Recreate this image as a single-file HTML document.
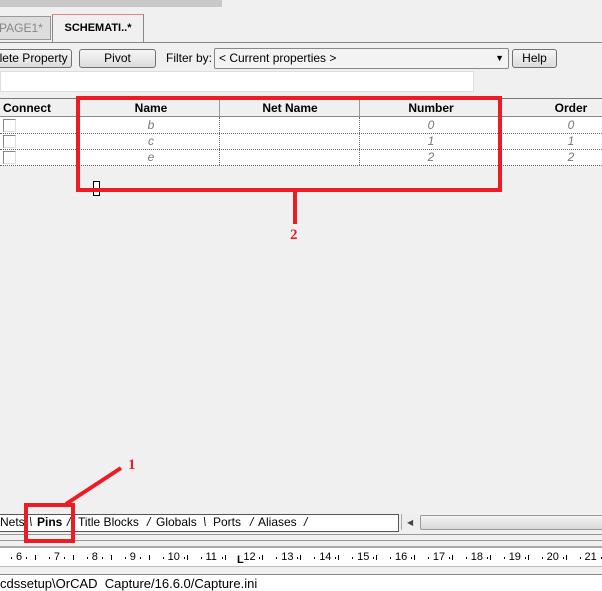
<!DOCTYPE html>
<html><head><meta charset="utf-8"><style>
body{margin:0;width:602px;height:591px;background:#f0f0f0;position:relative;overflow:hidden;font-family:"Liberation Sans",sans-serif;font-size:12px;color:#000}
.a{position:absolute}
.btn{position:absolute;height:17px;border:1px solid #707070;border-radius:3px;background:linear-gradient(#f6f6f6,#dcdcdc);text-align:center;line-height:17px;font-size:12px;white-space:nowrap;overflow:hidden}
.hd{position:absolute;top:99px;height:18px;line-height:18px;font-weight:bold;text-align:center;font-size:12px}
.cell{position:absolute;height:16px;line-height:16px;font-style:italic;color:#777;text-align:center;width:40px}
.dl{position:absolute;left:0;width:602px;border-top:1px dotted #666}
.vd{position:absolute;border-left:1px dotted #666}
.cb{position:absolute;left:3px;width:11px;height:11px;border:1px solid #888;border-right-color:#ddd;border-bottom-color:#ddd;background:#fff}
.rn{position:absolute;top:551px;font-size:11px}
.bt{position:absolute;top:515px;line-height:15px;font-size:12px;white-space:pre}
</style></head><body>
<div class="a" style="left:0;top:0;width:222px;height:7px;background:#c8c8c8"></div>
<div class="a" style="left:-2px;top:16px;width:51px;height:22px;border:1px solid #999;background:#ddd;color:#888;line-height:22px;font-size:12px">PAGE1*</div>
<div class="a" style="left:52px;top:14px;width:90px;height:28px;border:1px solid #888;border-top-color:#f08080;border-bottom:none;background:#f0f0f0;font-weight:bold;line-height:26px;text-align:center;font-size:11px">SCHEMATI..*</div>
<div class="a" style="left:0;top:42px;width:602px;height:1px;background:#888"></div>
<div class="btn" style="left:-30px;top:49px;width:100px;text-align:right">elete Property&nbsp;</div>
<div class="btn" style="left:79px;top:49px;width:75px">Pivot</div>
<div class="a" style="left:166px;top:50px;line-height:17px">Filter by:</div>
<div class="a" style="left:214px;top:48px;width:289px;height:19px;border:1px solid #888;border-radius:2px;background:#f3f3f3;line-height:19px;padding-left:4px">&lt; Current properties &gt;<span style="position:absolute;right:4px;top:0;font-size:9px">▼</span></div>
<div class="btn" style="left:512px;top:49px;width:43px">Help</div>
<div class="a" style="left:0;top:71px;width:472px;height:19px;background:#fff;border:1px solid #ddd"></div>
<div class="a" style="left:0;top:98px;width:602px;height:1px;background:#777"></div>
<div class="a" style="left:0;top:117px;width:602px;height:48px;background:#fff"></div>
<div class="a" style="left:0;top:116px;width:602px;height:1px;background:#888"></div>
<div class="hd" style="left:3px;text-align:left">Connect</div>
<div class="hd" style="left:81px;width:140px">Name</div>
<div class="hd" style="left:220px;width:140px">Net Name</div>
<div class="hd" style="left:360px;width:142px">Number</div>
<div class="hd" style="left:540px;width:62px">Order</div>
<div class="a" style="left:219px;top:99px;width:1px;height:18px;background:#999"></div>
<div class="a" style="left:359px;top:99px;width:1px;height:18px;background:#999"></div>
<div class="vd" style="left:219px;top:117px;height:48px"></div>
<div class="vd" style="left:359px;top:117px;height:48px"></div>
<div class="dl" style="top:133px"></div><div class="dl" style="top:149px"></div><div class="dl" style="top:165px"></div>
<div class="cb" style="top:119px"></div><div class="cb" style="top:135px"></div><div class="cb" style="top:151px"></div>
<div class="cell" style="left:131px;top:117px">b</div>
<div class="cell" style="left:131px;top:133px">c</div>
<div class="cell" style="left:131px;top:149px">e</div>
<div class="cell" style="left:411px;top:117px">0</div>
<div class="cell" style="left:411px;top:133px">1</div>
<div class="cell" style="left:411px;top:149px">2</div>
<div class="cell" style="left:551px;top:117px">0</div>
<div class="cell" style="left:551px;top:133px">1</div>
<div class="cell" style="left:551px;top:149px">2</div>
<div class="a" style="left:93px;top:181px;width:5px;height:13px;border:1px solid #000;background:#fff"></div>
<div class="a" style="left:76px;top:96px;width:418px;height:88px;border:4px solid #ed1c24"></div>
<div class="a" style="left:293px;top:188px;width:4px;height:36px;background:#ed1c24"></div>
<div class="a" style="left:290px;top:227px;color:#ed1c24;font-weight:bold;font-size:15px;font-family:'Liberation Serif',serif">2</div>
<div class="a" style="left:0;top:514px;width:398px;height:16px;background:#fff;border:1px solid #555;border-left:none"></div>
<div class="bt" style="left:0">Nets</div>
<div class="bt" style="left:29px"><i>\</i></div>
<div class="bt" style="left:37px"><b>Pins</b></div>
<div class="bt" style="left:67px"><i>/</i></div>
<div class="bt" style="left:78px">Title Blocks</div>
<div class="bt" style="left:147px"><i>/</i></div>
<div class="bt" style="left:156px">Globals</div>
<div class="bt" style="left:203px"><i>\</i></div>
<div class="bt" style="left:213px">Ports</div>
<div class="bt" style="left:250px"><i>/</i></div>
<div class="bt" style="left:258px">Aliases</div>
<div class="bt" style="left:304px"><i>/</i></div>
<div class="a" style="left:401px;top:514px;width:201px;height:16px;background:#eee;border-left:1px solid #aaa"></div>
<div class="a" style="left:407px;top:515px;font-size:8px;color:#444;line-height:15px">◀</div>
<div class="a" style="left:420px;top:515px;width:182px;height:13px;border:1px solid #999;border-radius:2px;background:linear-gradient(#f4f4f4,#d8d8d8)"></div>
<div class="a" style="left:0;top:534px;width:602px;height:1px;background:#999"></div>
<div class="a" style="left:0;top:540px;width:602px;height:1px;background:#999"></div>
<div class="a" style="left:0;top:546px;width:602px;height:2px;background:#aaa"></div>
<div class="a" style="left:0;top:548px;width:602px;height:18px;background:#fff"></div>
<div class="a" style="left:0;top:566px;width:602px;height:1px;background:#bbb"></div>
<div class="a" style="left:0;top:574px;width:602px;height:1px;background:#888"></div>
<div class="a" style="left:0;top:575px;width:602px;height:16px;background:#fff"></div>
<div class="a" style="left:0;top:576px;font-size:13px;white-space:pre">cdssetup\OrCAD  Capture/16.6.0/Capture.ini</div>
<div class="a" style="left:24px;top:503px;width:43px;height:32px;border:4px solid #ed1c24"></div>
<svg class="a" style="left:0;top:0" width="602" height="591"><line x1="66" y1="504" x2="121" y2="468" stroke="#ed1c24" stroke-width="4"/></svg>
<div class="a" style="left:128px;top:457px;color:#ed1c24;font-weight:bold;font-size:15px;font-family:'Liberation Serif',serif">1</div>
<script>
var h='';var sp=37.9;
for(var n=5;n<=22;n++){var x=19+(n-6)*sp;
 if(n>=6&&n<=21)h+='<div class="rn" style="left:'+(x-3)+'px">'+(n)+'</div>';
 var w=(n>=10)?12:6;
 [w+4,19,sp-5].forEach(function(o){var dx=Math.round(x-3+o);if(dx>0&&dx<602)h+='<div class="a" style="left:'+dx+'px;top:'+(o==19?555:557)+'px;width:1px;height:'+(o==19?5:2)+'px;background:#000"></div>';});}
h+='<div class="a" style="left:237px;top:554px;font-size:11px;font-weight:bold">L</div>';
document.body.insertAdjacentHTML('beforeend',h);
</script>
</body></html>
